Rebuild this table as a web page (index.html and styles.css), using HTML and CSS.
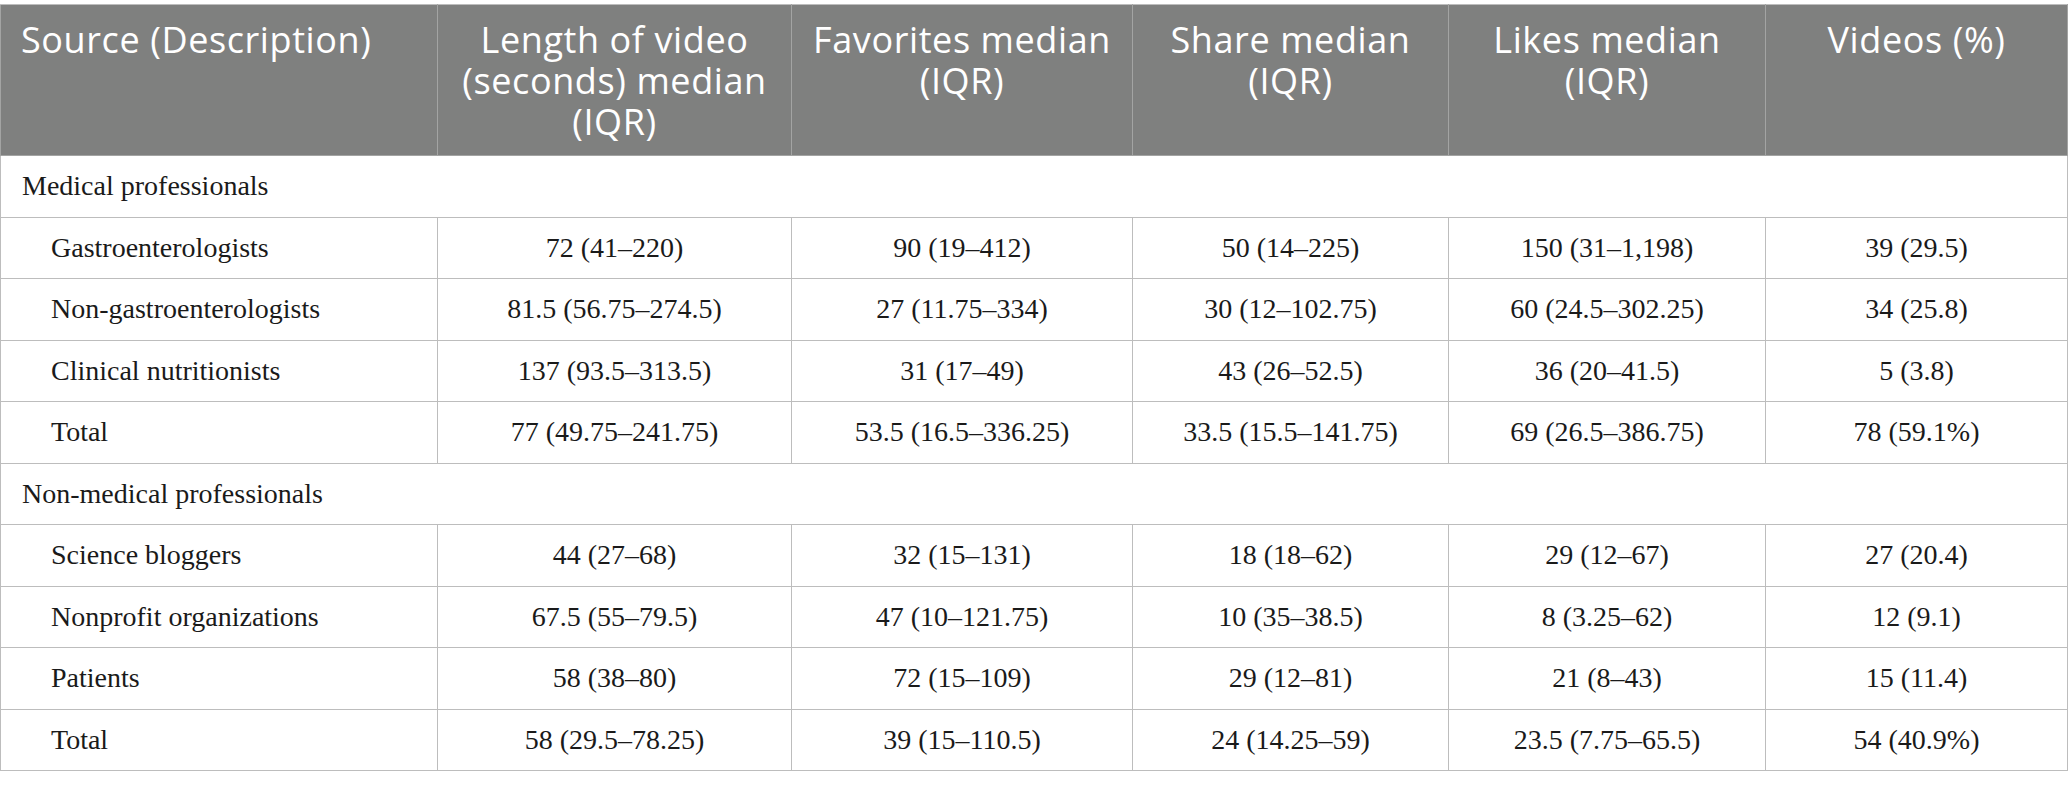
FILE: index.html
```html
<!DOCTYPE html>
<html lang="en">
<head>
<meta charset="utf-8">
<title>Video sources table</title>
<link rel="stylesheet" href="styles.css">
</head>
<body>
<table class="data">
  <colgroup>
    <col class="c1"><col class="c2"><col class="c3"><col class="c4"><col class="c5"><col class="c6">
  </colgroup>
  <thead>
    <tr>
      <th class="first">Source (Description)</th>
      <th>Length of video (seconds) median (IQR)</th>
      <th>Favorites median (IQR)</th>
      <th>Share median (IQR)</th>
      <th>Likes median (IQR)</th>
      <th>Videos (%)</th>
    </tr>
  </thead>
  <tbody>
    <tr class="group"><td colspan="6">Medical professionals</td></tr>
    <tr><td class="label">Gastroenterologists</td><td>72 (41–220)</td><td>90 (19–412)</td><td>50 (14–225)</td><td>150 (31–1,198)</td><td>39 (29.5)</td></tr>
    <tr><td class="label">Non-gastroenterologists</td><td>81.5 (56.75–274.5)</td><td>27 (11.75–334)</td><td>30 (12–102.75)</td><td>60 (24.5–302.25)</td><td>34 (25.8)</td></tr>
    <tr><td class="label">Clinical nutritionists</td><td>137 (93.5–313.5)</td><td>31 (17–49)</td><td>43 (26–52.5)</td><td>36 (20–41.5)</td><td>5 (3.8)</td></tr>
    <tr><td class="label">Total</td><td>77 (49.75–241.75)</td><td>53.5 (16.5–336.25)</td><td>33.5 (15.5–141.75)</td><td>69 (26.5–386.75)</td><td>78 (59.1%)</td></tr>
    <tr class="group"><td colspan="6">Non-medical professionals</td></tr>
    <tr><td class="label">Science bloggers</td><td>44 (27–68)</td><td>32 (15–131)</td><td>18 (18–62)</td><td>29 (12–67)</td><td>27 (20.4)</td></tr>
    <tr><td class="label">Nonprofit organizations</td><td>67.5 (55–79.5)</td><td>47 (10–121.75)</td><td>10 (35–38.5)</td><td>8 (3.25–62)</td><td>12 (9.1)</td></tr>
    <tr><td class="label">Patients</td><td>58 (38–80)</td><td>72 (15–109)</td><td>29 (12–81)</td><td>21 (8–43)</td><td>15 (11.4)</td></tr>
    <tr><td class="label">Total</td><td>58 (29.5–78.25)</td><td>39 (15–110.5)</td><td>24 (14.25–59)</td><td>23.5 (7.75–65.5)</td><td>54 (40.9%)</td></tr>
  </tbody>
</table>
</body>
</html>
```
FILE: styles.css
```css
html, body {
  margin: 0;
  padding: 0;
  background: #ffffff;
}
body {
  padding-top: 4px;
}
.data {
  border-collapse: collapse;
  table-layout: fixed;
  width: 2067px;
  font-family: "Liberation Serif", "Times New Roman", serif;
  font-size: 28px;
  color: #1a1a1a;
}
.c1 { width: 437px; }
.c2 { width: 354px; }
.c3 { width: 341px; }
.c4 { width: 316px; }
.c5 { width: 317px; }
.c6 { width: 302px; }

.data th {
  height: 151px;
  box-sizing: border-box;
  background: #7f807f;
  color: #ffffff;
  font-family: "Open Sans", "Noto Sans", sans-serif;
  font-weight: 400;
  font-size: 36px;
  line-height: 41px;
  letter-spacing: 0.6px;
  text-align: center;
  vertical-align: top;
  padding: 14px 12px 0 12px;
  border: 1px solid #a3a4a3;
  border-top-color: #bdbdbd;
}
.data th.first {
  text-align: left;
  padding-left: 20px;
}
.data td {
  height: 61.5px;
  box-sizing: border-box;
  border: 1px solid #bdbdbd;
  text-align: center;
  vertical-align: middle;
  padding: 0 10px;
  line-height: 32px;
}
.data tr.group td {
  text-align: left;
  padding-left: 21px;
}
.data td.label {
  text-align: left;
  padding-left: 50px;
}
```
